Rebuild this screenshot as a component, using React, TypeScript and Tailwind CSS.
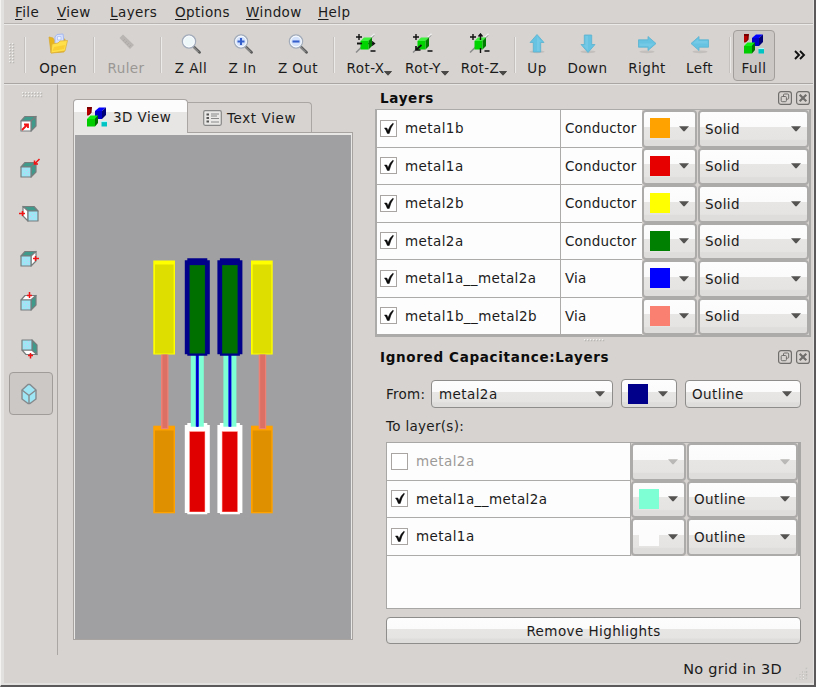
import React from "react";

const FACE = "bg-[linear-gradient(to_bottom,#fdfdfd_0%,#fbfbfb_43%,#e8e6e5_43%,#e6e4e3_80%,#dfdddb_84%)]";

function CubesIcon() {
  return (
    <svg width="22" height="22" viewBox="0 0 22 22">
      <path d="M1 1 H6 L5 7 L2.5 9.5 H1Z" fill="#b80000" />
      <path d="M1 1 H6 L5 3 H1Z" fill="#7a0000" />
      <path d="M5 2 V6.5 L2.5 9" stroke="#600000" fill="none" />
      <path d="M9 5 L13 1.5 H20 L16 5Z" fill="#0000ff" />
      <path d="M16 5 L20 1.5 V9 L16 13Z" fill="#000078" />
      <path d="M9 5 H16 V13 H9Z" fill="#0000c8" />
      <path d="M1 13 L4.5 9.5 H12 L9 13Z" fill="#10f010" />
      <path d="M9 13 L12 9.5 V17 L9 20.5Z" fill="#007000" />
      <path d="M1 13 H9 V20.5 H1Z" fill="#00cc00" />
      <path d="M15.5 16 H21 V20.5 H15.5Z" fill="#00c4c4" />
      <path d="M15.5 15.6 H21" stroke="#a0ffff" fill="none" />
    </svg>
  );
}

function OpenIcon() {
  return (
    <svg width="22" height="22" viewBox="0 0 22 22">
      <path d="M2 4 L6 5 L7 7 L18 6 L17 19 L4 20Z" fill="#e9b51d" stroke="#d8a62a" strokeWidth=".7" />
      <path d="M8 4 L10 1.5 L16 1 L17 9 L8 11Z" fill="#d8e2ff" stroke="#a6b8ee" />
      <path d="M10.5 3.5 H14 V7 H10.5Z" fill="#eef3ff" stroke="#a8baee" strokeWidth=".7" />
      <path d="M5 11 L11 10 L13 8 L20.5 7.5 L18 18 L4 20Z" fill="#ffe04a" stroke="#dcae34" strokeWidth=".7" />
      <path d="M7 14 L18 12 L17 16 L5.5 18Z" fill="#f9cf34" />
    </svg>
  );
}

function RulerIcon() {
  return (
    <svg width="22" height="22" viewBox="0 0 22 22">
      <path d="M4.5 5 L8 1.5 L19 12 L15 16Z" fill="#b8b5b2" />
      <path d="M8 8 l2-2 M10 10 l2-2 M12 12 l2-2 M14 14 l2-2" stroke="#aaa7a4" strokeWidth=".8" />
    </svg>
  );
}

function LensIcon({ sign }: { sign?: string }) {
  return (
    <svg width="22" height="22" viewBox="0 0 22 22">
      <path d="M14 14 L19.7 19.5" stroke="#5c5c5c" strokeWidth="2.5" strokeLinecap="round" />
      <path d="M13.5 14 L18.5 19" stroke="#b0b0b0" strokeWidth=".9" />
      <circle cx="9" cy="8.5" r="6.6" fill="#e6effb" stroke="#a3acba" strokeWidth="1.3" />
      <circle cx="9" cy="8.5" r="5.3" fill={sign ? "#d3e1fa" : "#edf6f8"} stroke="#fff" strokeWidth=".8" />
      {sign && <path d={sign === "+" ? "M5.5 8.5 H12.5 M9 5 V12" : "M5.5 8.5 H12.5"} stroke="#3560cc" strokeWidth="2.1" />}
    </svg>
  );
}

function RotIcon({ axis }: { axis: string }) {
  return (
    <svg width="22" height="22" viewBox="0 0 22 22">
      <path d="M1 19.5 L19 2" stroke="#8a8a8a" strokeWidth="1.5" />
      <path d="M15.5 4.5 L19.5 .8" stroke="#f2f2f2" strokeWidth="1.3" />
      {axis === "X" && <path d="M2 10.5 H19.5 M17 8.5 L19.5 10.5 L17 12.5" stroke="#111" strokeWidth="1.3" fill="none" />}
      <path d="M5.5 8 L9 4.5 H17 L13.5 8Z" fill="#3cf03c" />
      <path d="M13.5 8 L17 4.5 V13 L13.5 16.5Z" fill="#007a00" />
      <path d="M5.5 8 H13.5 V16.5 H5.5Z" fill="#00d400" />
      {axis === "X" && <path d="M2 10.5 H7" stroke="#111" strokeWidth="1.6" />}
      {axis === "Y" && <path d="M4.5 16.5 L9.5 12 M4 13 V17 H8.5" stroke="#111" strokeWidth="1.7" fill="none" />}
      {axis === "Z" && <path d="M11.5 1 V7 M9.5 3.5 L11.5 1 L13.5 3.5 M11.5 15 V20" stroke="#111" strokeWidth="1.4" fill="none" />}
      <path d="M1 4 H7 M4 1 V7 M15.5 18 H20.5" stroke="#111" strokeWidth="1.4" />
    </svg>
  );
}

const ROTATION: Record<string, string> = {
  up: "",
  right: "rotate(90 11 10.5)",
  down: "rotate(180 11 10.5)",
  left: "rotate(270 11 10.5)",
};

function ArrowIcon({ dir }: { dir: string }) {
  return (
    <svg width="22" height="22" viewBox="0 0 22 22">
      <ellipse cx="11" cy="18.8" rx="7.5" ry="1.4" fill="#c2bfbc" />
      <path
        transform={ROTATION[dir]}
        d="M11 1.5 L18 9.5 H14.7 V19 H7.3 V9.5 H4Z"
        fill="#66c3e2"
        stroke="#5cb2d0"
        strokeWidth=".8"
      />
      <path transform={ROTATION[dir]} d="M11 3.5 L15.5 8.7 H13.5 V18 H11Z" fill="#74cae6" />
    </svg>
  );
}

function Caret({ muted }: { muted?: boolean }) {
  return (
    <svg width="10" height="6" viewBox="0 0 10 6" className="shrink-0">
      <path d="M0 .3 H10 L5.8 5 Q5 5.8 4.2 5Z" fill={muted ? "#bab8b6" : "#555352"} />
    </svg>
  );
}

function Tool({ label, icon, w, menu, muted }: { label: string; icon: React.ReactNode; w: string; menu?: boolean; muted?: boolean }) {
  return (
    <div className={`flex shrink-0 flex-col items-center pt-[8px] ${w}`}>
      {icon}
      <div className={`mt-[5px] flex h-4 items-center leading-4 whitespace-nowrap ${muted ? "text-[#9a9794]" : ""}`}>
        {label}
        {menu && (
          <span className="mt-[11px] -mr-[7px] w-[7px]">
            <svg width="8" height="5" viewBox="0 0 8 5" className="block">
              <path d="M.5 .5 H7.5 L4 4.2Z" fill="#4a4846" stroke="#4a4846" />
            </svg>
          </span>
        )}
      </div>
    </div>
  );
}

function Sep({ m }: { m: string }) {
  return <div className={`mt-[12px] h-[36px] w-[2px] shrink-0 border-l border-[#c4c1be] bg-[#eceae8] ${m}`} />;
}

function Dots({ cols, rows }: { cols: number; rows: number }) {
  const pts = Array.from({ length: cols * rows }, (_, i) => [(i % cols) * 3, Math.floor(i / cols) * 3]);
  return (
    <svg width={cols * 3} height={rows * 3}>
      {pts.map(([x, y]) => (
        <g key={`${x}-${y}`}>
          <rect x={x + 0.7} y={y + 0.7} width="1.5" height="1.5" fill="#b4b1ae" />
          <rect x={x} y={y} width="1.3" height="1.3" fill="#f4f3f2" />
        </g>
      ))}
    </svg>
  );
}

function ViewCube({ kind }: { kind: string }) {
  const edge = "#777d7d";
  const face = "#9ee6f6";
  const side = "#3f9a8c";
  if (kind === "iso") {
    return (
      <svg width="24" height="24" viewBox="0 0 24 24">
        <g stroke="#85898c" strokeWidth="1.4" strokeLinejoin="round" fill={face}>
          <path d="M5 8 L11 2.5 H13 L19 8 V17 L13 21.5 H11 L5 17Z" />
          <path d="M5 8 L12 13.5 L19 8 M12 13.5 V21.5" fill="none" />
        </g>
      </svg>
    );
  }
  const mirrored = kind === "left";
  const low = kind === "bottom";
  return (
    <svg width="24" height="24" viewBox="0 0 24 24">
      <g transform={mirrored ? "translate(25 0) scale(-1 1)" : low ? "translate(1 23) scale(1 -1)" : ""}>
        <g stroke={edge} strokeWidth="1.2" strokeLinejoin="round">
          <path d="M4 9 L8 4.5 H19 L14 9Z" fill={kind === "top" || low ? "#fff" : side} />
          <path d="M14 9 L19 4.5 V14 L14 19Z" fill={kind === "right" || mirrored ? "#fff" : side} />
          <path d="M4 9 H14 V19 H4Z" fill={kind === "front" ? "#fff" : face} />
        </g>
        {kind !== "front" && <path d="M6 11.5 h1 m2 1 h1 m-3 3 h1 m3 -1 h1 m-2 3 h1" stroke="#c9c6f4" />}
      </g>
      <g stroke="#f21414" strokeWidth="1.5" fill="none">
        {kind === "front" && <path d="M5 18 L10.5 12.5 M7 12.5 H11 V16" strokeWidth="1.8" />}
        {kind === "back" && <path d="M22.5 1 L18 5.5 M17.5 2.5 V6 H21" />}
        {mirrored && <path d="M2 11.5 H8 M5.5 9 V14" />}
        {kind === "right" && <path d="M16 11.5 H22 M18.5 9 V14" />}
        {kind === "top" && <path d="M12.5 1 V7 M10 4.5 H15" />}
        {low && <path d="M13.5 17 V22.5 M11 19.5 H16" />}
      </g>
    </svg>
  );
}

const VIEWS = [
  { kind: "front", h: "h-[46px]" },
  { kind: "back", h: "h-[45px]" },
  { kind: "left", h: "h-[44px]" },
  { kind: "right", h: "h-[46px]" },
  { kind: "top", h: "h-[42px]" },
  { kind: "bottom", h: "h-[48px]" },
];

function Check({ on }: { on: boolean }) {
  return (
    <span className="flex size-[17px] shrink-0 items-center justify-center border border-[#a9a5a3] bg-white">
      {on && (
        <svg width="12" height="13" viewBox="0 0 12 13">
          <path d="M1.5 6 L3.8 6 L5 8.7 Q6.8 3.5 9.8 1.3 L10.5 1.7 Q7.6 5.5 6.2 11.5 H4.4 Q3.2 8 1.5 6Z" fill="#0a0a0a" stroke="#0a0a0a" strokeWidth=".5" />
        </svg>
      )}
    </span>
  );
}

function ColorCombo({ color, muted }: { color: string; muted?: boolean }) {
  return (
    <div className={`flex h-full w-[55px] shrink-0 items-center rounded-[4px] border-2 border-[#adabaa] pl-[6px] ${FACE}`}>
      <span className="mb-[1px] size-5 shrink-0" style={{ backgroundColor: color }} />
      <span className="ml-[9px] flex">
        <Caret muted={muted} />
      </span>
    </div>
  );
}

function StyleCombo({ text, muted }: { text: string; muted?: boolean }) {
  return (
    <div className={`ml-px flex h-full min-w-0 flex-1 items-center justify-between rounded-[4px] border-2 border-[#adabaa] pr-[6px] pl-[5px] ${FACE}`}>
      <span className="leading-4">{text}</span>
      <Caret muted={muted} />
    </div>
  );
}

const LAYERS = [
  ["metal1b", "Conductor", "#ffa200"],
  ["metal1a", "Conductor", "#e60000"],
  ["metal2b", "Conductor", "#ffff00"],
  ["metal2a", "Conductor", "#008000"],
  ["metal1a__metal2a", "Via", "#0000ff"],
  ["metal1b__metal2b", "Via", "#fa8072"],
];

const TARGETS = [
  { name: "metal2a", on: false, color: "transparent", style: "" },
  { name: "metal1a__metal2a", on: true, color: "#7fffd4", style: "Outline" },
  { name: "metal1a", on: true, color: "#fcfcfc", style: "Outline" },
];

function PanelTitle({ children }: { children: string }) {
  return (
    <div className="flex h-[18px] items-center justify-between pl-[5px]">
      <span className="text-[13.5px] leading-4 font-bold tracking-[0.67px] text-[#0c0c0c]">{children}</span>
      <span className="flex gap-[4px]">
        <svg width="14" height="14" viewBox="0 0 14 14" fill="none" stroke="#706e6c">
          <rect x=".6" y=".6" width="12.8" height="12.8" rx="2.5" strokeWidth="1.2" />
          <rect x="5.5" y="3" width="5.2" height="5.2" rx="1" />
          <rect x="3.2" y="5.5" width="5.2" height="5.2" rx="1" fill="#d6d3d0" />
        </svg>
        <svg width="14" height="14" viewBox="0 0 14 14" fill="none" stroke="#706e6c">
          <rect x=".6" y=".6" width="12.8" height="12.8" rx="2.5" strokeWidth="1.2" />
          <path d="M3.7 3.7 L10.3 10.3 M10.3 3.7 L3.7 10.3" strokeWidth="2.2" />
        </svg>
      </span>
    </div>
  );
}

function Scene() {
  return (
    <svg width="276" height="504" viewBox="75 135 276 504" className="block">
      {[153.3, 251].map((x) => (
        <g key={x}>
          <rect x={x} y="260.5" width="21.7" height="94" fill="#ffff00" />
          <rect x={x + 1.7} y="264.5" width="18.6" height="89" fill="#dede00" />
          <rect x={x} y="425.7" width="21.7" height="87.6" fill="#ffa200" />
          <rect x={x + 1.7} y="430.5" width="18.6" height="81.5" fill="#df9000" />
          <rect x={x + 7.7} y="354.6" width="7.5" height="74.5" fill="#ee8175" />
          <rect x={x + 9.2} y="354.6" width="4.8" height="73.4" fill="#dc7065" />
        </g>
      ))}
      {[184.8, 217.4].map((x) => (
        <g key={x}>
          <path d={`M${x + 2.5} 423 h20 v2 h2.5 v88 h-2.5 v1.3 h-20 v-1.3 h-2.5 v-88 h2.5Z`} fill="#fff" />
          <rect x={x + 4.5} y="431.3" width="15.8" height="80.7" fill="#ff6a60" />
          <rect x={x + 5.2} y="432" width="14.5" height="79.5" fill="#e00000" />
          <rect x={x + 6} y="355" width="13" height="71.7" fill="#7fffd4" />
          <rect x={x + 11} y="355" width="3" height="71.7" fill="#0000f0" />
          <rect x={x + 12} y="355" width="1.2" height="71.7" fill="#0000b0" />
          <path d={`M${x + 2.5} 258.2 h20 v2 h2.5 v94 h-2.5 v1.6 h-20 v-1.6 h-2.5 v-94 h2.5Z`} fill="#00008b" />
          <rect x={x + 4.7} y="265" width="15.6" height="88.6" fill="#005a20" />
          <rect x={x + 5.3} y="265.7" width="14.4" height="87.2" fill="#007000" />
        </g>
      ))}
    </svg>
  );
}

const MENUS = [
  ["File", "w-[42px]"],
  ["View", "w-[53px]"],
  ["Layers", "w-[65px]"],
  ["Options", "w-[71px]"],
  ["Window", "w-[72px]"],
  ["Help", "w-[40px]"],
];

export default function App() {
  return (
    <div className="flex h-[687px] w-[816px] flex-col overflow-hidden border-r-2 border-b-2 border-l border-r-[#5b5959] border-b-[#5b5959] border-l-[#f4f3f2] bg-[#d6d3d0] font-['DejaVu_Sans',sans-serif] text-[13.5px] tracking-[0.42px] text-[#1c1b1b]">
      <div className="flex min-h-0 flex-1 flex-col border-r border-b-2 border-l-[3px] border-[#e3e1df]">
        <div className="flex h-[24px] shrink-0 items-center border-b border-[#b8b5b2] pl-[11px]">
          {MENUS.map(([m, w]) => (
            <span key={m} className={`leading-4 ${w}`}>
              <span className="underline decoration-1 underline-offset-2">{m[0]}</span>
              {m.slice(1)}
            </span>
          ))}
        </div>

        <div className="flex h-[60px] shrink-0 border-t border-b border-t-[#eceae9] border-b-[#a9a6a4]">
          <div className="w-[20px] pt-[18px] pl-[5px]">
            <Dots cols={2} rows={7} />
          </div>
          <Sep m="" />
          <Tool label="Open" icon={<OpenIcon />} w="w-[64px]" />
          <Sep m="ml-[3px]" />
          <Tool label="Ruler" icon={<RulerIcon />} w="w-[62px]" muted />
          <Sep m="ml-[3px]" />
          <Tool label="Z All" icon={<LensIcon />} w="w-[58px]" />
          <Tool label="Z In" icon={<LensIcon sign="+" />} w="w-[45px]" />
          <Tool label="Z Out" icon={<LensIcon sign="-" />} w="w-[66px]" />
          <Sep m="ml-[2px]" />
          <Tool label="Rot-X" icon={<RotIcon axis="X" />} w="w-[61px]" menu />
          <Tool label="Rot-Y" icon={<RotIcon axis="Y" />} w="w-[54px]" menu />
          <Tool label="Rot-Z" icon={<RotIcon axis="Z" />} w="w-[60px]" menu />
          <Sep m="ml-[4px]" />
          <Tool label="Up" icon={<ArrowIcon dir="up" />} w="w-[42px]" />
          <Tool label="Down" icon={<ArrowIcon dir="down" />} w="w-[59px]" />
          <Tool label="Right" icon={<ArrowIcon dir="right" />} w="w-[60px]" />
          <Tool label="Left" icon={<ArrowIcon dir="left" />} w="w-[45px]" />
          <Sep m="ml-[7px]" />
          <div className="mt-[5px] ml-[2px] flex h-[51px] w-[42px] justify-center rounded-[4px] border border-[#a19e9c] bg-[#cbc8c6]">
            <Tool label="Full" icon={<div className="-mt-[3px] h-[22px]"><CubesIcon /></div>} w="w-[40px] -mt-[3px]" />
          </div>
          <svg width="12" height="10" viewBox="0 0 12 10" className="mt-[25px] ml-[19px]">
            <path d="M1 1 L5 5 L1 9 M6 1 L10 5 L6 9" fill="none" stroke="#111" strokeWidth="1.9" />
          </svg>
        </div>

        <div className="flex min-h-0 flex-1">
          <div className="flex h-[571px] w-[54px] shrink-0 flex-col border-t border-r border-t-[#e8e6e5] border-r-[#a9a6a4]">
            <div className="flex h-[16px] justify-center pt-[7px] pl-[4px]">
              <Dots cols={7} rows={2} />
            </div>
            {VIEWS.map((v) => (
              <div key={v.kind} className={`flex items-center justify-center pr-[3px] ${v.h}`}>
                <ViewCube kind={v.kind} />
              </div>
            ))}
            <div className="ml-[5px] flex h-[43px] w-[44px] items-center justify-center rounded-[4px] border border-[#9f9c9a] bg-[#cbc8c6] pr-[4px]">
              <ViewCube kind="iso" />
            </div>
          </div>

          <div className="flex w-[313px] shrink-0 flex-col border-t border-[#e8e6e5] pt-[14px] pl-[15px]">
            <div className="flex h-[33px] items-end">
              <div className="z-10 -mb-px flex h-[34px] w-[115px] items-center rounded-t-[4px] border border-b-0 border-[#a9a6a4] bg-linear-to-b from-[#fcfcfc] from-35% to-[#e8e6e4] to-35% pl-[12px]">
                <CubesIcon />
                <span className="ml-[5px] leading-4">3D View</span>
              </div>
              <div className="flex h-[30px] w-[124px] items-center rounded-tr-[4px] border border-b-0 border-l-0 border-[#a9a6a4] pl-[15px]">
                <svg width="19" height="16" viewBox="0 0 19 16">
                  <rect x=".7" y=".7" width="17.6" height="14.6" rx="1.5" fill="#e9e8e7" stroke="#888" strokeWidth="1.2" />
                  <path d="M3.5 4.5 h2.5 M3.5 8 h2.5 M3.5 11.5 h2.5" stroke="#555" strokeWidth="2" />
                  <path d="M8 4 H16 M8 6 H14 M8 8.5 H16 M8 12 H16" stroke="#888" />
                </svg>
                <span className="ml-[5px] leading-4 tracking-[0.6px]">Text View</span>
              </div>
            </div>
            <div className="w-[280px] border border-[#a6a3a1] bg-[#e9e7e5] pt-[2px] pr-px pb-0 pl-[1px]">
              <div className="h-[504px] bg-[#a0a0a2]">
                <Scene />
              </div>
            </div>
            <div className="h-0" />
          </div>

          <div className="flex min-w-0 flex-1 flex-col border-t border-[#e8e6e5] pt-[4px] pl-[4px]">
            <div className="pr-[3px]">
              <PanelTitle>Layers</PanelTitle>
            </div>
            <div className="mt-[2px] h-[228px] w-[436px] border-2 border-t border-[#adabaa] bg-[#d6d3d0]">
              {LAYERS.map(([name, type, color]) => (
                <div key={name} className="flex h-[37.5px]">
                  <div className="flex w-[184px] items-center border-r border-b border-[#adabaa] bg-[#fdfdfd] pl-[3px]">
                    <Check on />
                    <span className="ml-[8px] leading-4">{name}</span>
                  </div>
                  <div className="flex w-[81px] items-center border-b border-[#adabaa] bg-[#fdfdfd] pl-[4px] leading-4 tracking-[0.18px]">{type}</div>
                  <ColorCombo color={color} />
                  <StyleCombo text="Solid" />
                </div>
              ))}
            </div>
            <div className="flex h-[11px] justify-center pt-[2px]">
              <Dots cols={7} rows={1} />
            </div>
            <div className="pr-[3px]">
              <PanelTitle>Ignored Capacitance:Layers</PanelTitle>
            </div>
            <div className="mt-[13px] flex h-[29px] items-center pl-[11px]">
              <span className="w-[45px] leading-4 tracking-[0.25px]">From:</span>
              <div className={`flex h-[28px] w-[182px] items-center justify-between rounded-[4px] border border-[#8f8d8b] pr-[7px] pl-[7px] ${FACE}`}>
                <span className="leading-4">metal2a</span>
                <Caret />
              </div>
              <div className={`ml-[8px] flex h-[29px] w-[56px] items-center rounded-[4px] border border-[#8f8d8b] pl-[6px] ${FACE}`}>
                <span className="size-5 bg-[#00008b]" />
                <span className="ml-[10px] flex">
                  <Caret />
                </span>
              </div>
              <div className={`ml-[8px] flex h-[28px] w-[116px] items-center justify-between rounded-[4px] border border-[#8f8d8b] pr-[8px] pl-[6px] ${FACE}`}>
                <span className="leading-4">Outline</span>
                <Caret />
              </div>
            </div>
            <div className="mt-[10px] pl-[11px] leading-4 tracking-[0.3px]">To layer(s):</div>
            <div className="mt-[8px] ml-[11px] h-[167px] w-[415px] border border-[#a9a7a6] bg-[#fdfdfd]">
              {TARGETS.map((t) => (
                <div key={t.name} className="flex h-[37.5px] border-r-2 border-[#a9a7a6] bg-[#d6d3d0]">
                  <div className="flex w-[244px] items-center border-r border-b border-[#adabaa] bg-[#fdfdfd] pl-[4px]">
                    <Check on={t.on} />
                    <span className={`ml-[8px] leading-4 ${t.on ? "" : "text-[#9c9a98]"}`}>{t.name}</span>
                  </div>
                  <ColorCombo color={t.color} muted={!t.on} />
                  <StyleCombo text={t.style} muted={!t.on} />
                </div>
              ))}
            </div>
            <div className={`mt-[8px] ml-[11px] flex h-[27px] w-[415px] items-center justify-center rounded-[4px] border border-[#8f8d8b] leading-4 ${FACE}`}>
              Remove Highlights
            </div>
            <div className="mt-[15px] flex items-start justify-end">
              <span className="text-[14.5px] leading-5 tracking-[0.25px]">No grid in 3D</span>
              <svg width="14" height="14" viewBox="0 0 14 14" className="mt-[8px] mr-[4px] ml-[13px]">
                {[0, 1, 2, 3].flatMap((r) =>
                  Array.from({ length: r + 1 }, (_, c) => (
                    <rect key={`${r}-${c}`} x={11 - c * 3.3} y={1 + r * 3.3} width="1.5" height="1.5" fill="#f4f3f2" stroke="#bbb8b5" strokeWidth=".4" />
                  )),
                )}
              </svg>
            </div>
          </div>
        </div>
      </div>
    </div>
  );
}
